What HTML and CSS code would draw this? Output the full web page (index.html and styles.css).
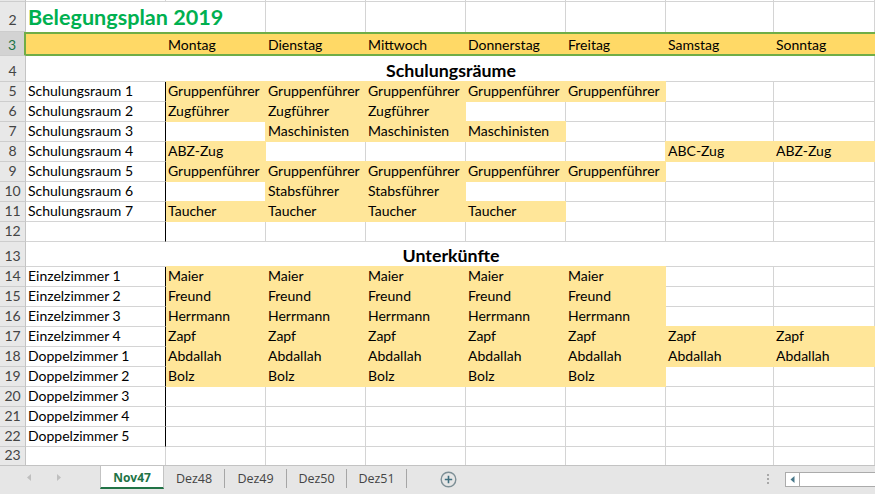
FILE: index.html
```html
<!DOCTYPE html>
<html lang="de">
<head>
<meta charset="utf-8">
<title>Belegungsplan 2019</title>
<link rel="stylesheet" href="styles.css">
</head>
<body>
<div class="sheet">
  <div class="h r1"></div><div class="c r1"></div><div class="c r1"></div><div class="c r1"></div><div class="c r1"></div><div class="c r1"></div><div class="c r1"></div><div class="c r1"></div><div class="c r1"></div>

  <div class="h r2">2</div><div class="c r2 title">Belegungsplan 2019</div><div class="c r2"></div><div class="c r2"></div><div class="c r2"></div><div class="c r2"></div><div class="c r2"></div><div class="c r2"></div><div class="c r2"></div>

  <div class="h sel">3</div><div class="c hd"></div><div class="c hd">Montag</div><div class="c hd">Dienstag</div><div class="c hd">Mittwoch</div><div class="c hd">Donnerstag</div><div class="c hd">Freitag</div><div class="c hd">Samstag</div><div class="c hd">Sonntag</div>

  <div class="h">4</div><div class="c m">Schulungsräume</div>

  <div class="h">5</div><div class="c k">Schulungsraum 1</div><div class="c f b">Gruppenführer</div><div class="c f">Gruppenführer</div><div class="c f">Gruppenführer</div><div class="c f">Gruppenführer</div><div class="c f">Gruppenführer</div><div class="c"></div><div class="c"></div>

  <div class="h">6</div><div class="c k">Schulungsraum 2</div><div class="c f b">Zugführer</div><div class="c f">Zugführer</div><div class="c f">Zugführer</div><div class="c"></div><div class="c"></div><div class="c"></div><div class="c"></div>

  <div class="h">7</div><div class="c k">Schulungsraum 3</div><div class="c"></div><div class="c f">Maschinisten</div><div class="c f">Maschinisten</div><div class="c f">Maschinisten</div><div class="c"></div><div class="c"></div><div class="c"></div>

  <div class="h">8</div><div class="c k">Schulungsraum 4</div><div class="c f b">ABZ-Zug</div><div class="c"></div><div class="c"></div><div class="c"></div><div class="c"></div><div class="c f">ABC-Zug</div><div class="c f">ABZ-Zug</div>

  <div class="h">9</div><div class="c k">Schulungsraum 5</div><div class="c f b">Gruppenführer</div><div class="c f">Gruppenführer</div><div class="c f">Gruppenführer</div><div class="c f">Gruppenführer</div><div class="c f">Gruppenführer</div><div class="c"></div><div class="c"></div>

  <div class="h">10</div><div class="c k">Schulungsraum 6</div><div class="c"></div><div class="c f">Stabsführer</div><div class="c f">Stabsführer</div><div class="c"></div><div class="c"></div><div class="c"></div><div class="c"></div>

  <div class="h">11</div><div class="c k">Schulungsraum 7</div><div class="c f b">Taucher</div><div class="c f">Taucher</div><div class="c f">Taucher</div><div class="c f">Taucher</div><div class="c"></div><div class="c"></div><div class="c"></div>

  <div class="h">12</div><div class="c k"></div><div class="c"></div><div class="c"></div><div class="c"></div><div class="c"></div><div class="c"></div><div class="c"></div><div class="c"></div>

  <div class="h">13</div><div class="c m">Unterkünfte</div>

  <div class="h">14</div><div class="c k">Einzelzimmer 1</div><div class="c f b">Maier</div><div class="c f">Maier</div><div class="c f">Maier</div><div class="c f">Maier</div><div class="c f">Maier</div><div class="c"></div><div class="c"></div>

  <div class="h">15</div><div class="c k">Einzelzimmer 2</div><div class="c f b">Freund</div><div class="c f">Freund</div><div class="c f">Freund</div><div class="c f">Freund</div><div class="c f">Freund</div><div class="c"></div><div class="c"></div>

  <div class="h">16</div><div class="c k">Einzelzimmer 3</div><div class="c f b">Herrmann</div><div class="c f">Herrmann</div><div class="c f">Herrmann</div><div class="c f">Herrmann</div><div class="c f">Herrmann</div><div class="c"></div><div class="c"></div>

  <div class="h">17</div><div class="c k">Einzelzimmer 4</div><div class="c f b">Zapf</div><div class="c f">Zapf</div><div class="c f">Zapf</div><div class="c f">Zapf</div><div class="c f">Zapf</div><div class="c f">Zapf</div><div class="c f">Zapf</div>

  <div class="h">18</div><div class="c k">Doppelzimmer 1</div><div class="c f b">Abdallah</div><div class="c f">Abdallah</div><div class="c f">Abdallah</div><div class="c f">Abdallah</div><div class="c f">Abdallah</div><div class="c f">Abdallah</div><div class="c f">Abdallah</div>

  <div class="h">19</div><div class="c k">Doppelzimmer 2</div><div class="c f b">Bolz</div><div class="c f">Bolz</div><div class="c f">Bolz</div><div class="c f">Bolz</div><div class="c f">Bolz</div><div class="c"></div><div class="c"></div>

  <div class="h">20</div><div class="c k">Doppelzimmer 3</div><div class="c"></div><div class="c"></div><div class="c"></div><div class="c"></div><div class="c"></div><div class="c"></div><div class="c"></div>

  <div class="h">21</div><div class="c k">Doppelzimmer 4</div><div class="c"></div><div class="c"></div><div class="c"></div><div class="c"></div><div class="c"></div><div class="c"></div><div class="c"></div>

  <div class="h">22</div><div class="c k">Doppelzimmer 5</div><div class="c"></div><div class="c"></div><div class="c"></div><div class="c"></div><div class="c"></div><div class="c"></div><div class="c"></div>

  <div class="h r23">23</div><div class="c r23"></div><div class="c r23"></div><div class="c r23"></div><div class="c r23"></div><div class="c r23"></div><div class="c r23"></div><div class="c r23"></div><div class="c r23"></div>
</div>

<div class="tabs">
  <div class="nav">
    <svg width="100" height="28" viewBox="0 0 100 28"><polygon points="31,8 27,11.5 31,15" fill="#bfbfbf"/><polygon points="57,8 61,11.5 57,15" fill="#bfbfbf"/></svg>
  </div>
  <div class="tab on">Nov47</div>
  <div class="tab w61">Dez48</div>
  <div class="tab w62">Dez49</div>
  <div class="tab w60">Dez50</div>
  <div class="tab w60">Dez51</div>
  <div class="add">
    <svg width="17" height="17" viewBox="0 0 17 17"><circle cx="8.5" cy="8.5" r="7.3" fill="none" stroke="#7d8f96" stroke-width="1.4"/><path d="M8.5 4.8v7.4M4.8 8.5h7.4" stroke="#3f6f7f" stroke-width="1.6"/></svg>
  </div>
  <div class="spacer"></div>
  <div class="dots">
    <svg width="3" height="12" viewBox="0 0 3 12"><rect x="0" y="0" width="2" height="2" fill="#a8a8a8"/><rect x="0" y="4" width="2" height="2" fill="#a8a8a8"/><rect x="0" y="8" width="2" height="2" fill="#a8a8a8"/></svg>
  </div>
  <div class="hscroll">
    <div class="sbtn"><svg width="13" height="13" viewBox="0 0 13 13"><polygon points="8.5,3 4.5,6.5 8.5,10" fill="#48788a"/></svg></div>
    <div class="track"></div>
  </div>
</div>
</body>
</html>
```
FILE: styles.css
```css
* { box-sizing: border-box; margin: 0; padding: 0; }
html, body { width: 875px; height: 494px; overflow: hidden; background: #fff; }
body { font-family: Lato, "Liberation Sans", sans-serif; font-size: 14px; color: #000; }

.sheet {
  display: grid;
  grid-template-columns: 26px 140px repeat(5, 100px) 108px 101px;
  grid-template-rows: 2px 30px 24px 26px repeat(8, 20px) 25px repeat(9, 20px) 18px;
}

.c, .h {
  display: flex;
  align-items: flex-end;
  border-right: 1px solid #d4d4d4;
  border-bottom: 1px solid #d4d4d4;
  padding: 0 0 1px 2px;
  line-height: 1.2;
  white-space: nowrap;
}

.h {
  background: #e8e8e8;
  border-right-color: #c4c4c4;
  border-bottom-color: #cdcdcd;
  justify-content: center;
  padding-left: 0;
  color: #444;
}

.r1 { padding: 0; }
.r2 { border-bottom: none; padding-bottom: 2px; }
.h.r2 { border-bottom: 1px solid #cdcdcd; padding-bottom: 2px; }
.r23 { border-bottom: none; }

.title {
  font-weight: 700;
  font-size: 21.6px;
  color: #00b050;
  border-right: none;
  padding-bottom: 1px;
}

.hd {
  background: #ffd966;
  border-top: 2px solid #70ad47;
  border-bottom: 2px solid #70ad47;
  border-right: none;
  padding-bottom: 0;
}

.h.sel {
  background: #d3d3d3;
  color: #217346;
  border-right: 2px solid #70ad47;
}

.m {
  grid-column: span 8;
  justify-content: center;
  font-weight: 700;
  font-size: 17.8px;
  padding-bottom: 0;
}

.k { border-right-color: #000; }

.f {
  background: #ffe699;
  border-color: #ffe699;
  box-shadow: -1px -1px 0 #ffe699, -1px 0 0 #ffe699, 0 -1px 0 #ffe699;
}
.f.b { box-shadow: 0 -1px 0 #ffe699; }

/* sheet tab bar */
.tabs {
  display: flex;
  height: 29px;
  background: #e6e6e6;
  border-top: 1px solid #c3c3c3;
  font-family: "Open Sans", "Noto Sans", sans-serif;
  font-size: 12.5px;
  color: #444;
}

.nav { width: 100px; flex: none; }
.nav svg { display: block; }

.tab {
  flex: none;
  margin-top: 3px;
  height: 19px;
  line-height: 19px;
  text-align: center;
  border-right: 1px solid #a6a6a6;
}
.w60 { width: 60px; }
.w61 { width: 61px; }
.w62 { width: 62px; }

.tab.on {
  width: 64px;
  margin-top: 0;
  height: 23px;
  padding-top: 2px;
  background: #fff;
  border-left: 1px solid #c3c3c3;
  border-right: 1px solid #c3c3c3;
  border-bottom: 2px solid #217346;
  color: #217346;
  font-weight: 700;
  font-size: 12px;
}

.add { flex: none; margin: 5px 0 0 33px; }
.add svg { display: block; }

.spacer { flex: 1; }

.dots { flex: none; margin: 8px 15px 0 0; }
.dots svg { display: block; }

.hscroll {
  flex: none;
  display: flex;
  width: 90px;
  height: 15px;
  margin-top: 6px;
  background: #fff;
  border: 1px solid #ababab;
  border-right: none;
}
.sbtn {
  width: 14px;
  height: 13px;
  border-right: 1px solid #ababab;
}
.sbtn svg { display: block; }
.track { flex: 1; }
```
